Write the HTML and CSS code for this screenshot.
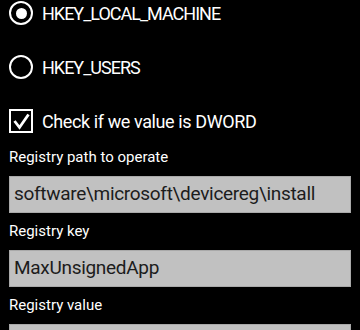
FILE: index.html
```html
<!DOCTYPE html>
<html>
<head>
<meta charset="UTF-8">
<meta name="viewport" content="width=device-width, initial-scale=1.0">
<title>Registry</title>
<link rel="stylesheet" href="styles.css">
</head>
<body>

<!-- HIVE -->
<div class="opts">

<div class="opt">
<span class="radio on"></span>
<span class="opt-text hive">HKEY_LOCAL_MACHINE</span>
</div>

<div class="opt">
<span class="radio"></span>
<span class="opt-text hive">HKEY_USERS</span>
</div>

<!-- DWORD -->
<div class="opt">
<span class="check">
<svg width="19" height="19" viewBox="0 0 19 19"><path d="M2.5 9 L7.5 15.5 L16.5 2.5" fill="none" stroke="white" stroke-width="2.8"/></svg>
</span>
<span class="opt-text">Check if we value is DWORD</span>
</div>

</div>

<!-- FIELDS -->
<div class="field">
<label>Registry path to operate</label>
<div class="box">software\microsoft\devicereg\install</div>
</div>

<div class="field">
<label>Registry key</label>
<div class="box">MaxUnsignedApp</div>
</div>

<div class="field">
<label>Registry value</label>
<div class="box"></div>
</div>

</body>
</html>
```

FILE: styles.css
```css
body{
margin:0;
background:#000;
color:white;
font-family:Roboto,"Open Sans",sans-serif;
}

/* OPTIONS */
.opts{
margin-top:-14px;
}

.opt{
display:flex;
align-items:center;
height:54px;
padding-left:9px;
}

.opt-text{
font-size:18px;
margin-left:9px;
letter-spacing:-0.4px;
}

.hive{
letter-spacing:-1px;
}

.radio{
width:24px;
height:24px;
box-sizing:border-box;
border:2.5px solid white;
border-radius:50%;
display:flex;
align-items:center;
justify-content:center;
}

.radio.on::after{
content:"";
width:11px;
height:11px;
border-radius:50%;
background:white;
}

.check{
width:24px;
height:24px;
box-sizing:border-box;
border:2.5px solid white;
display:flex;
align-items:center;
justify-content:center;
}

/* FIELDS */
.field{
padding:0 9px;
margin-bottom:9px;
}

.field label{
display:block;
height:18px;
line-height:18px;
margin-bottom:10px;
font-size:15px;
}

.box{
height:37px;
box-sizing:border-box;
background:#c1c1c1;
border:1px solid #a9a9a9;
color:#1c1c1c;
font-size:19px;
line-height:34px;
padding-left:4px;
letter-spacing:-0.3px;
}
```
